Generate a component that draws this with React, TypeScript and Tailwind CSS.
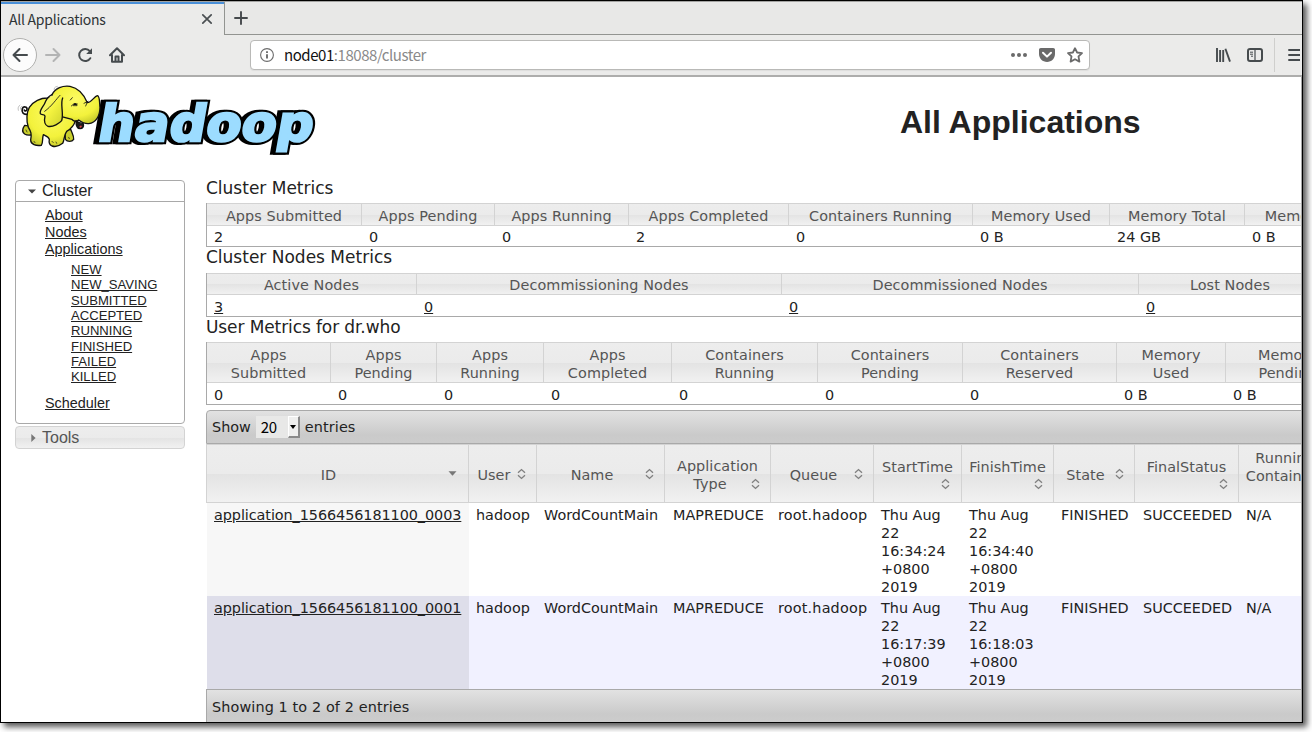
import type { ReactNode } from "react";

const HEAD_BG =
  "bg-[linear-gradient(to_bottom,#ededed_0%,#ebebeb_50%,#e3e3e3_51%,#f1f1f1_100%)]";
const BAR_BG = "bg-[linear-gradient(to_bottom,#e2e2e2_0%,#cacaca_75%,#cccccc_100%)]";

function Elephant() {
  return (
    <g stroke="#111" strokeWidth="4" strokeLinejoin="round" strokeLinecap="round">
      <path d="M52 103C40 105 34 96 37 86C40 78 52 80 51 88C50 94 44 94 43 90" fill="none" strokeWidth="5" />
      <path d="M165 150L166 178C172 186 186 186 191 178C192 168 186 160 182 148Z" fill="#c9cf2c" />
      <path d="M44 136C37 146 36 156 44 162C50 166 60 166 68 164L74 140Z" fill="#c9cf2c" />
      <path
        d="M112 54C92 54 70 64 58 82C50 96 48 122 55 142C62 154 66 160 62 180C62 194 78 198 94 196C100 188 96 176 100 164C108 168 116 170 118 178C116 188 118 194 126 198C138 202 148 198 158 190C164 180 160 168 170 154C184 146 192 138 196 122L150 50Z"
        fill="url(#hide)"
      />
      <path
        d="M126 44C136 24 158 16 180 19C206 24 222 44 232 68C244 68 252 50 262 47C270 48 268 66 270 82C270 108 258 128 236 131C224 132 214 126 206 120C200 126 190 124 186 118L140 106L126 44Z"
        fill="url(#hide)"
      />
      <path d="M198 122C198 134 202 146 210 146C218 146 222 140 220 131C212 130 204 128 198 122Z" fill="#1a1a1a" />
      <path d="M207 141C209 136 214 135 217 138L212 144Z" fill="#e0474c" strokeWidth="1" />
      <path
        d="M156 41C136 40 114 48 107 66C101 80 88 90 91 101C94 106 102 102 105 108C102 122 102 134 114 139C130 142 148 130 155 122C162 100 150 72 158 54Z"
        fill="url(#ear)"
        stroke="none"
      />
      <path
        d="M126 44C112 50 109 60 105 68C100 80 88 90 91 101C94 106 102 102 105 108C102 122 102 134 114 139C130 142 148 130 155 122C162 100 150 72 158 54"
        fill="none"
      />
      <path d="M150 46C138 58 126 78 104 94" fill="none" strokeWidth="2.5" />
      <path d="M190 76C192 69 199 69 201 76Z" fill="#111" strokeWidth="2" />
      <path d="M181 60L187 53M184 78L192 71L202 72M222 70L234 64M227 78L232 66" fill="none" strokeWidth="2.5" />
      <path d="M126 184L130 188M138 186L140 190M72 184L75 188M48 150L51 156M176 172L178 176" fill="none" strokeWidth="2" />
      <path d="M25 91C23 84 25 79 30 75M32 88C30 83 32 81 35 79M133 31C131 25 134 20 142 19M140 29C140 25 142 23 147 22" fill="none" strokeWidth="1.2" stroke="#666" />
    </g>
  );
}

function HadoopLogo() {
  const letters = {
    x: 0,
    y: 0,
    fontFamily: "DejaVu Sans",
    fontWeight: 700,
    fontSize: 150,
    textLength: 646,
    lengthAdjust: "spacingAndGlyphs" as const,
  };
  return (
    <svg width="310" height="80" viewBox="0 0 930 240" className="shrink-0 overflow-visible">
      <defs>
        <radialGradient id="hide" cx="0.5" cy="0.35" r="0.7">
          <stop offset="0" stopColor="#fcfb62" />
          <stop offset="0.65" stopColor="#f3f23c" />
          <stop offset="1" stopColor="#c2c72a" />
        </radialGradient>
        <linearGradient id="ear" x1="0" y1="0" x2="1" y2="1">
          <stop offset="0" stopColor="#fafa9a" />
          <stop offset="0.5" stopColor="#f4f33f" />
          <stop offset="1" stopColor="#cdd22e" />
        </linearGradient>
      </defs>
      <g transform="translate(258 183) skewX(-10)">
        <g aria-hidden="true" stroke="#000" strokeWidth="20" fill="#000" strokeLinejoin="miter" strokeMiterlimit="2">
          <text {...letters} x={-10}>hadoop</text>
          <text {...letters}>hadoop</text>
        </g>
        <text {...letters} fill="#9cdcff" stroke="#9cdcff" strokeWidth="7">hadoop</text>
      </g>
      <Elephant />
    </svg>
  );
}

function TabStrip() {
  return (
    <div className="flex h-[33px] shrink-0 bg-[#e8e8e7]">
      <div className="flex w-[223px] items-center justify-between border-t-2 border-[#4a90d9] bg-[#ebebea] pr-[11px] pb-[2px] pl-2 text-[#2e3436]">
        <span className="text-[14px] leading-none tracking-[-0.25px]">All Applications</span>
        <svg width="12" height="12" viewBox="0 0 12 12" stroke="#4a4f52" strokeWidth="1.7" strokeLinecap="round">
          <path d="M1.8 1.8L10.2 10.2M10.2 1.8L1.8 10.2" />
        </svg>
      </div>
      <div className="flex flex-1 items-center border-b border-l border-[#929491] pl-[9px]">
        <svg width="14" height="14" viewBox="0 0 14 14" stroke="#45494c" strokeWidth="1.9" strokeLinecap="round">
          <path d="M7 1V13M1 7H13" />
        </svg>
      </div>
    </div>
  );
}

function NavBar() {
  return (
    <div className="flex h-[42px] shrink-0 items-center border-b-2 border-[#adadac] bg-[#ebebea]">
      <div className="ml-[2px] flex size-[34px] items-center justify-center rounded-full border border-[#b0b0ae] bg-[#fcfcfc]">
        <svg width="16" height="16" viewBox="0 0 16 16" fill="none" stroke="#464b4e" strokeWidth="2" strokeLinecap="round" strokeLinejoin="round">
          <path d="M15 8H1.5M7.5 2L1.5 8L7.5 14" />
        </svg>
      </div>
      <svg className="ml-2" width="16" height="16" viewBox="0 0 16 16" fill="none" stroke="#b3b4b4" strokeWidth="2" strokeLinecap="round" strokeLinejoin="round">
        <path d="M1 8H14.5M8.5 2L14.5 8L8.5 14" />
      </svg>
      <svg className="ml-4" width="16" height="16" viewBox="0 0 16 16" fill="none" stroke="#464b4e" strokeWidth="2" strokeLinecap="round">
        <path d="M13.3 11.2A6 6 0 1 1 12.8 4.2" />
        <path d="M15 1.2V7H9.2Z" fill="#464b4e" stroke="none" />
      </svg>
      <svg className="ml-4" width="16" height="16" viewBox="0 0 16 16" fill="none" stroke="#464b4e" strokeWidth="2" strokeLinecap="round" strokeLinejoin="round">
        <path d="M1 8.3L8 1.3L15 8.3M3 8V14.8H13V8" />
        <path d="M6.5 14V9.5H9.5V14" />
      </svg>
      <div className="ml-[125px] flex h-[30px] w-[840px] items-center rounded-[4px] border border-[#b9b9b7] bg-white pr-[6px] pl-[9px] shadow-[0_1px_1px_rgba(0,0,0,0.06)]">
        <svg width="14" height="14" viewBox="0 0 14 14" fill="none" stroke="#6c6c6c">
          <circle cx="7" cy="7" r="6.4" strokeWidth="1.1" />
          <path d="M7 6.2V10.6" strokeWidth="1.9" />
          <path d="M7 3.2V4.9" strokeWidth="1.9" />
        </svg>
        <span className="ml-[10px] flex-1 pb-[2px] text-[15px] leading-none tracking-[-0.45px] text-[#8a8a8a]">
          <span className="text-[#111]">node01</span>:18088/cluster
        </span>
        <svg width="16" height="16" viewBox="0 0 16 16" fill="#6a6a6a">
          <circle cx="2" cy="8" r="2" />
          <circle cx="8" cy="8" r="2" />
          <circle cx="14" cy="8" r="2" />
        </svg>
        <svg className="ml-3" width="16" height="16" viewBox="0 0 16 16">
          <path d="M1.8 1H14.2C15.2 1 16 1.8 16 2.8V7C16 11.4 12.4 15 8 15S0 11.4 0 7V2.8C0 1.8.8 1 1.8 1Z" fill="#6a6a6a" />
          <path d="M4 5.8L8 9.6L12 5.8" fill="none" stroke="#fff" strokeWidth="2" strokeLinecap="round" strokeLinejoin="round" />
        </svg>
        <svg className="ml-3" width="16" height="16" viewBox="0 0 16 16" fill="none" stroke="#6a6a6a" strokeWidth="1.8" strokeLinejoin="round">
          <path d="M8 1.2L10.1 5.5L15 6.1L11.5 9.4L12.4 14.6L8 12.2L3.6 14.6L4.5 9.4L1 6.1L5.9 5.5Z" />
        </svg>
      </div>
      <svg className="ml-[125px]" width="16" height="16" viewBox="0 0 16 16" fill="none" stroke="#464b4e" strokeWidth="1.9">
        <path d="M2 1V15M5.1 3V15M8.2 3V15M10.4 1.8L15 14.6" />
      </svg>
      <svg className="ml-4" width="16" height="16" viewBox="0 0 16 16" fill="none" stroke="#464b4e">
        <rect x="1" y="2" width="14" height="12" rx="2" strokeWidth="2" />
        <path d="M8 2V14" strokeWidth="1.2" />
        <path d="M3 5.2H6M3 7.2H6M4 9.2H6" strokeWidth="1" />
      </svg>
      <div className="ml-[11px] h-[34px] w-px bg-[#cfcfcd]" />
      <svg className="ml-[13px] shrink-0" width="12" height="16" viewBox="0 0 12 16" stroke="#464b4e" strokeWidth="1.9" strokeLinecap="round">
        <path d="M1 3H13M1 8H13M1 13H13" />
      </svg>
    </div>
  );
}

const STATES = ["NEW", "NEW_SAVING", "SUBMITTED", "ACCEPTED", "RUNNING", "FINISHED", "FAILED", "KILLED"];

function Sidebar() {
  return (
    <nav className="mt-[19px] ml-[14px] w-[170px] shrink-0 font-['Liberation_Sans',sans-serif] text-[#222]">
      <div className="h-[244px] rounded-[4px] border border-[#a9a9a9]">
        <div className="flex h-[21px] items-center border-b border-[#a9a9a9] pl-[12px] text-[16px]">
          <svg width="8" height="5" viewBox="0 0 8 5" fill="#444">
            <path d="M0 .5H8L4 4.5Z" />
          </svg>
          <span className="ml-[6px] leading-none">Cluster</span>
        </div>
        <ul className="pt-[5px] pl-[29px] text-[14.4px] leading-[17px] underline">
          <li>About</li>
          <li>Nodes</li>
          <li>Applications</li>
        </ul>
        <ul className="pt-[4px] pl-[55px] text-[13.1px] leading-[15.35px] underline">
          {STATES.map((s) => (
            <li key={s}>{s}</li>
          ))}
        </ul>
        <div className="pt-[10.4px] pl-[29px] text-[14.4px] leading-[17px] underline">Scheduler</div>
      </div>
      <div className={`mt-[2px] flex h-[23px] items-center rounded-[4px] border border-[#d3d3d3] pl-[15px] text-[16px] text-[#555] ${HEAD_BG}`}>
        <svg width="5" height="8" viewBox="0 0 5 8" fill="#777">
          <path d="M.3 0V8L4.6 4Z" />
        </svg>
        <span className="ml-[6px] leading-none">Tools</span>
      </div>
    </nav>
  );
}

type Metric = { label: ReactNode; value: string; width: string };

function MetricsTable({ cols, head, body, linked }: { cols: Metric[]; head: string; body: string; linked?: boolean }) {
  return (
    <div className="w-[1300px] border-l border-[#a9a9a9]">
      <div className={`flex border-y border-[#d3d3d3] text-center tracking-[0.09px] text-[#555] ${head} ${HEAD_BG}`}>
        {cols.map((c, i) => (
          <div key={i} className={`flex shrink-0 items-center justify-center border-r border-[#d3d3d3] pt-[2px] leading-[18px] ${c.width}`}>
            <div>{c.label}</div>
          </div>
        ))}
      </div>
      <div className={`flex items-center border-b border-[#a9a9a9] leading-[18px] ${body}`}>
        {cols.map((c, i) => (
          <div key={i} className={`shrink-0 pt-[2px] pl-[7px] ${c.width}`}>
            <span className={linked ? "underline" : ""}>{c.value}</span>
          </div>
        ))}
      </div>
    </div>
  );
}

const CLUSTER: Metric[] = [
  { label: "Apps Submitted", value: "2", width: "w-[155px]" },
  { label: "Apps Pending", value: "0", width: "w-[133px]" },
  { label: "Apps Running", value: "0", width: "w-[134px]" },
  { label: "Apps Completed", value: "2", width: "w-[160px]" },
  { label: "Containers Running", value: "0", width: "w-[184px]" },
  { label: "Memory Used", value: "0 B", width: "w-[137px]" },
  { label: "Memory Total", value: "24 GB", width: "w-[135px]" },
  { label: "Memory Reserved", value: "0 B", width: "w-[172px]" },
];

const NODES: Metric[] = [
  { label: "Active Nodes", value: "3", width: "w-[210px]" },
  { label: "Decommissioning Nodes", value: "0", width: "w-[365px]" },
  { label: "Decommissioned Nodes", value: "0", width: "w-[357px]" },
  { label: "Lost Nodes", value: "0", width: "w-[183px]" },
];

const two = (a: string, b: string) => (
  <>
    {a}
    <br />
    {b}
  </>
);

const USER: Metric[] = [
  { label: two("Apps", "Submitted"), value: "0", width: "w-[124px]" },
  { label: two("Apps", "Pending"), value: "0", width: "w-[106px]" },
  { label: two("Apps", "Running"), value: "0", width: "w-[107px]" },
  { label: two("Apps", "Completed"), value: "0", width: "w-[128px]" },
  { label: two("Containers", "Running"), value: "0", width: "w-[146px]" },
  { label: two("Containers", "Pending"), value: "0", width: "w-[145px]" },
  { label: two("Containers", "Reserved"), value: "0", width: "w-[154px]" },
  { label: two("Memory", "Used"), value: "0 B", width: "w-[109px]" },
  { label: two("Memory", "Pending"), value: "0 B", width: "w-[124px]" },
];

function SortIcon() {
  return (
    <svg width="9" height="12" viewBox="0 0 9 12" fill="none" stroke="#808080" strokeWidth="1.4" className="shrink-0">
      <path d="M1 4.7L4.5 1.6L8 4.7M1 7.3L4.5 10.4L8 7.3" />
    </svg>
  );
}

function InlineHead({ label, width, icon }: { label: string; width: string; icon?: ReactNode }) {
  return (
    <div className={`flex shrink-0 items-center border-r border-[#d3d3d3] pr-[10px] pl-[2px] ${width}`}>
      <span className="flex-1 pt-[3px] text-center">{label}</span>
      {icon ?? <SortIcon />}
    </div>
  );
}

function StackedHead({ label, width, iconPad }: { label: string; width: string; iconPad: string }) {
  return (
    <div className={`flex shrink-0 flex-col items-center justify-center border-r border-[#d3d3d3] pt-[2px] ${width}`}>
      <span>{label}</span>
      <span className={`flex h-[15px] items-center self-end ${iconPad}`}>
        <SortIcon />
      </span>
    </div>
  );
}

const ROWS = [
  { id: "application_1566456181100_0003", start: "16:34:24", finish: "16:34:40", bg: "bg-white", idBg: "bg-[#f7f7f7]" },
  { id: "application_1566456181100_0001", start: "16:17:39", finish: "16:18:03", bg: "bg-[#f1f1ff]", idBg: "bg-[#dedeea]" },
];

function Stamp({ time }: { time: string }) {
  return (
    <>
      Thu Aug
      <br />
      22
      <br />
      {time}
      <br />
      +0800
      <br />
      2019
    </>
  );
}

function AppsTable() {
  return (
    <div className="mt-[5px] w-[1300px]">
      <div className={`flex h-[34px] items-center rounded-tl-[4px] border border-[#a9a9a9] pl-[5px] ${BAR_BG}`}>
        <span className="pt-[1px]">Show</span>
        <div className="ml-[5px] flex h-[22px] w-[44px] items-stretch bg-[#e8e8e7] pl-[5px] text-black">
          <span className="flex-1 font-['Noto_Sans_CJK_SC',sans-serif] text-[15px] leading-[21px] tracking-[-0.4px]">20</span>
          <span className="flex w-[12px] items-center justify-center border-t border-r-2 border-b-2 border-l border-t-white border-r-[#8a8a8a] border-b-[#8a8a8a] border-l-white bg-[#efefee]">
            <svg width="6" height="4" viewBox="0 0 6 4">
              <path d="M0 0H6L3 4Z" />
            </svg>
          </span>
        </div>
        <span className="ml-[5px] pt-[1px] tracking-[0.1px]">entries</span>
      </div>
      <div className={`flex h-[59px] border-y border-l border-[#d3d3d3] leading-[18px] tracking-[0.05px] text-[#555] ${HEAD_BG}`}>
        <InlineHead
          label="ID"
          width="w-[262px]"
          icon={
            <svg width="9" height="5" viewBox="0 0 9 5" fill="#777" className="mr-px shrink-0">
              <path d="M.5 .3H8.5L4.5 4.7Z" />
            </svg>
          }
        />
        <InlineHead label="User" width="w-[68px]" />
        <InlineHead label="Name" width="w-[128px]" />
        <div className="grid w-[106px] shrink-0 items-center border-r border-[#d3d3d3] pt-[3px]">
          <span className="col-start-1 row-start-1 text-center">
            Application
            <br />
            <span className="pr-[15px]">Type</span>
          </span>
          <span className="col-start-1 row-start-1 mt-[17px] mr-[10px] justify-self-end">
            <SortIcon />
          </span>
        </div>
        <InlineHead label="Queue" width="w-[103px]" />
        <StackedHead label="StartTime" width="w-[88px]" iconPad="pr-[11px]" />
        <StackedHead label="FinishTime" width="w-[92px]" iconPad="pr-[10px]" />
        <InlineHead label="State" width="w-[81px]" />
        <StackedHead label="FinalStatus" width="w-[104px]" iconPad="pr-[10px]" />
        <div className="w-[100px] shrink-0 pt-[4px] pr-[8px] text-center">
          Running
          <br />
          Containers
        </div>
      </div>
      {ROWS.map((r) => (
        <div key={r.id} className={`ml-px flex h-[93px] leading-[18px] *:shrink-0 *:pt-[3px] *:pl-[7px] ${r.bg}`}>
          <div className={`w-[262px] tracking-[-0.07px] underline ${r.idBg}`}>{r.id}</div>
          <div className="w-[68px]">hadoop</div>
          <div className="w-[128px]">WordCountMain</div>
          <div className="w-[106px]">
            <span className="ml-px">MAPREDUCE</span>
          </div>
          <div className="w-[103px] tracking-[0.18px]">root.hadoop</div>
          <div className="w-[88px]">
            <Stamp time={r.start} />
          </div>
          <div className="w-[92px]">
            <Stamp time={r.finish} />
          </div>
          <div className="w-[81px]">FINISHED</div>
          <div className="w-[104px]">
            <span className="ml-px">SUCCEEDED</span>
          </div>
          <div>N/A</div>
        </div>
      ))}
      <div className={`flex h-[34px] items-center border border-[#a9a9a9] pt-[4px] pl-[5px] tracking-[0.12px] ${BAR_BG}`}>
        Showing 1 to 2 of 2 entries
      </div>
    </div>
  );
}

export default function App() {
  return (
    <div className="h-[732px] w-[1312px] overflow-hidden bg-white">
      <div className="flex h-[723px] w-[1303px] flex-col border border-black bg-white font-['Noto_Sans_CJK_SC',sans-serif] shadow-[4px_4px_6px_rgba(0,0,0,0.65)]">
        <div className="h-px shrink-0 bg-[#a3a3a2]" />
        <TabStrip />
        <NavBar />
        <div className="flex min-h-0 flex-1 flex-col overflow-hidden border-r border-[#a9a9a9] bg-white">
          <header className="flex h-[84px] shrink-0 pt-[3px] pl-[9px]">
            <HadoopLogo />
            <h1 className="ml-[580px] pt-[18px] font-['Liberation_Sans',sans-serif] text-[32px] leading-[48px] font-bold whitespace-nowrap text-[#222]">
              All Applications
            </h1>
          </header>
          <div className="flex min-h-0 flex-1">
            <Sidebar />
            <main className="ml-[21px] min-w-0 flex-1 overflow-hidden pt-[17px] font-['DejaVu_Sans',sans-serif] text-[14.4px] text-[#222]">
              <h2 className="h-[25px] text-[17px] leading-[20px]">Cluster Metrics</h2>
              <MetricsTable cols={CLUSTER} head="h-[23px]" body="h-[21px]" />
              <h2 className="h-[26px] text-[17px] leading-[20px]">Cluster Nodes Metrics</h2>
              <MetricsTable cols={NODES} head="h-[22px]" body="h-[22px]" linked />
              <h2 className="h-[25px] text-[17px] leading-[20px] tracking-[-0.1px]">User Metrics for dr.who</h2>
              <MetricsTable cols={USER} head="h-[41px]" body="h-[22px]" />
              <AppsTable />
            </main>
          </div>
        </div>
      </div>
    </div>
  );
}
